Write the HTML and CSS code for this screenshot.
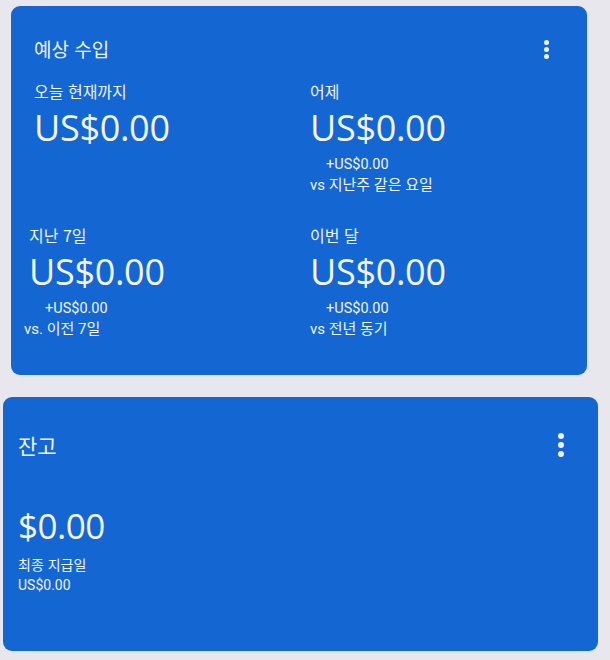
FILE: index.html
```html
<!DOCTYPE html>
<html lang="ko">
<head>
  <meta charset="UTF-8">
  <meta name="viewport" content="width=device-width, initial-scale=1.0">
  <title>AdSense 수입</title>
  <link rel="stylesheet" href="styles.css">
</head>
<body>

  <section class="card earnings">
    <div class="card-head">
      <h2>예상 수입</h2>
      <span class="kebab"><i></i><i></i><i></i></span>
    </div>

    <div class="stats">
      <div class="stat">
        <div class="label">오늘 현재까지</div>
        <div class="value">US$0.00</div>
      </div>
      <div class="stat">
        <div class="label">어제</div>
        <div class="value">US$0.00</div>
        <div class="delta">+US$0.00</div>
        <div class="compare">vs 지난주 같은 요일</div>
      </div>
      <div class="stat shift">
        <div class="label">지난 7일</div>
        <div class="value">US$0.00</div>
        <div class="delta">+US$0.00</div>
        <div class="compare">vs. 이전 7일</div>
      </div>
      <div class="stat">
        <div class="label">이번 달</div>
        <div class="value">US$0.00</div>
        <div class="delta">+US$0.00</div>
        <div class="compare">vs 전년 동기</div>
      </div>
    </div>
  </section>

  <section class="card balance">
    <div class="card-head">
      <h2>잔고</h2>
      <span class="kebab"><i></i><i></i><i></i></span>
    </div>
    <div class="big">$0.00</div>
    <div class="label">최종 지급일</div>
    <div class="paid">US$0.00</div>
  </section>

</body>
</html>
```

FILE: styles.css
```css
body {
  margin: 0;
  padding: 6px 0 0;
  background-color: #e9e7ee;
  font-family: "Noto Sans", "Noto Sans CJK KR", sans-serif;
  color: #f2f4fa;
  height: 660px;
  overflow: hidden;
}

.card {
  background-color: #1466d2;
  border-radius: 9px;
  box-sizing: border-box;
}

.earnings {
  margin: 0 23px 0 11px;
  height: 369px;
  padding: 25px 38px 0 23px;
}

.balance {
  margin: 22px 12px 0 3px;
  height: 254px;
  padding: 30px 34px 0 15px;
}

.card-head {
  display: flex;
  justify-content: space-between;
  align-items: center;
  height: 36px;
}

.card-head h2 {
  margin: 0;
  font-family: "Noto Sans CJK KR", sans-serif;
  font-weight: 400;
  font-size: 19px;
  line-height: 36px;
}

.balance .card-head h2 {
  font-size: 21px;
}

.kebab {
  display: flex;
  flex-direction: column;
  gap: 2px;
}

.kebab i {
  display: block;
  width: 5px;
  height: 5px;
  border-radius: 50%;
  background-color: #eef1f8;
}

.balance .kebab {
  gap: 3px;
}

.balance .kebab i {
  width: 6px;
  height: 6px;
}

.stats {
  display: grid;
  grid-template-columns: 276px 1fr;
  row-gap: 28px;
  margin-top: 13px;
}

.label {
  font-family: "Noto Sans CJK KR", sans-serif;
  font-size: 16px;
  line-height: 24px;
}

.stat .label {
  line-height: 22px;
}

.value {
  font-family: "Open Sans", sans-serif;
  font-size: 36px;
  line-height: 52px;
  letter-spacing: -0.3px;
}

.delta {
  font-family: "Roboto", sans-serif;
  font-size: 14.5px;
  line-height: 18px;
  margin-top: 2px;
  padding-left: 16px;
}

.compare {
  font-family: "Roboto", "Noto Sans CJK KR", sans-serif;
  font-size: 15px;
  line-height: 22px;
}

.shift {
  margin-left: -5px;
}

.shift .compare {
  margin-left: -5px;
}

.big {
  font-family: "Open Sans", sans-serif;
  font-size: 35px;
  line-height: 44px;
  margin-top: 41px;
  letter-spacing: -0.5px;
}

.balance .label {
  font-size: 14px;
  margin-top: 4px;
}

.paid {
  font-family: "Roboto", sans-serif;
  font-size: 14px;
  line-height: 18px;
}
```
